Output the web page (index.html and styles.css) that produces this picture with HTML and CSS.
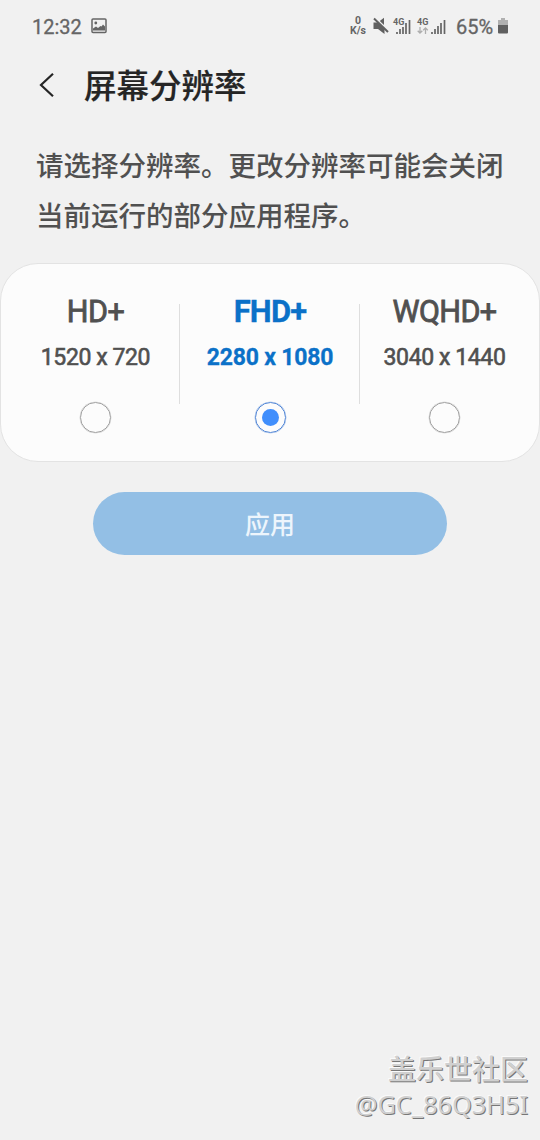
FILE: index.html
```html
<!DOCTYPE html>
<html lang="zh-CN">
<head>
<meta charset="utf-8">
<title>屏幕分辨率</title>
<link rel="stylesheet" href="styles.css">
</head>
<body>
<div class="screen">
  <div class="status">
    <span class="clock">12:32</span>
    <svg class="picture" width="16" height="16" viewBox="0 0 16 16"><rect x="1" y="1" width="14" height="13.5" rx="1" fill="none" stroke="#656565" stroke-width="1.5"/><circle cx="4.8" cy="5" r="1.4" fill="#656565"/><path d="M2 12.5V10.500l3-2 2 1.500 2.500-2 1 .5L12 6.500l2 2v4z" fill="#656565"/></svg>
    <div class="speed"><span>0</span><span>K/s</span></div>
    <svg class="mute" width="16" height="18" viewBox="0 0 16 18"><path d="M0.500 5.500h4L11.500 12v5L5 12H0.500z" fill="#606060"/><path d="M6.800 4L11 .8v7.200z" fill="#606060"/><path d="M1 1.500l14 13.500" stroke="#606060" stroke-width="2"/></svg>
    <div class="net first"><span class="gen">4G</span><svg class="bars" width="15" height="14" viewBox="0 0 15 14"><path d="M1 12v2M4 9v5M7 6v8M10 3v11M13.500 0v14" stroke="#656565" stroke-width="1.700"/></svg></div>
    <div class="net second"><span class="gen">4G</span><svg class="arrows" width="12" height="7" viewBox="0 0 12 7"><path d="M3 0v6M.7 3.700L3 6l2.300-2.300M8.500 7V1M6.200 3.300L8.500 1l2.300 2.300" fill="none" stroke="#adadad" stroke-width="1.300"/></svg><svg class="bars" width="15" height="14" viewBox="0 0 15 14"><path d="M1 12v2M4 9v5M7 6v8M10 3v11M13.500 0v14" stroke="#656565" stroke-width="1.700"/></svg></div>
    <span class="percent">65%</span>
    <svg class="battery" width="10" height="16" viewBox="0 0 10 16"><path d="M3 0h4v2h3v5H0V2h3z" fill="#b0b0b0"/><path d="M0 7h10v7.500q0 1-1 1H1q-1 0-1-1z" fill="#606060"/></svg>
  </div>
  <div class="header">
    <svg class="back" width="16" height="26" viewBox="0 0 16 26"><path d="M14 1.800L2 13l12 11.200" fill="none" stroke="#252525" stroke-width="2.200"/></svg>
    <h1 class="title">屏幕分辨率</h1>
  </div>
  <p class="description">请选择分辨率。更改分辨率可能会关闭<br>当前运行的部分应用程序。</p>
  <div class="card">
    <div class="option left"><span class="name">HD+</span><span class="size">1520 x 720</span><span class="radio"></span></div>
    <div class="option middle selected"><span class="name">FHD+</span><span class="size">2280 x 1080</span><span class="radio"></span></div>
    <div class="option right"><span class="name">WQHD+</span><span class="size">3040 x 1440</span><span class="radio"></span></div>
  </div>
  <button class="apply">应用</button>
  <div class="watermark"><span class="community">盖乐世社区</span><span class="user">@GC_86Q3H5I</span></div>
</div>
</body>
</html>
```
FILE: styles.css
```css
* { box-sizing: border-box; }
body { margin: 0; background: #f1f1f1; font-family: Roboto, "Noto Sans CJK SC", sans-serif; }
.screen { width: 540px; height: 1140px; display: flex; flex-direction: column; color: #505050; overflow: hidden; }
.status { height: 52px; display: flex; align-items: center; padding-left: 32px; color: #656565; white-space: nowrap; flex: none; }
.clock { font-size: 20px; width: 50px; padding-top: 1px; -webkit-text-stroke: .3px; }
.picture { margin-left: 9px; }
.speed { margin-left: 242px; width: 18px; display: flex; flex-direction: column; align-items: center; font-size: 10.500px; line-height: 10px; font-weight: 700; }
.mute { margin-left: 6px; }
.net { position: relative; height: 18px; }
.first { width: 18px; margin-left: 4px; }
.second { width: 29px; margin-left: 6px; }
.gen { position: absolute; left: 0; top: 1px; font-size: 9px; line-height: 9px; font-weight: 700; background: #f1f1f1; z-index: 1; }
.bars { position: absolute; right: 0; top: 3px; }
.arrows { position: absolute; left: 0; top: 10px; }
.percent { margin-left: 10px; font-size: 20px; width: 37px; padding-top: 1px; -webkit-text-stroke: .3px; }
.battery { margin-left: 5px; }
.header { display: flex; align-items: center; height: 66px; padding-left: 39px; flex: none; }
.title { margin: 4px 0 0 29px; font-size: 32.500px; line-height: 48px; font-weight: 500; color: #252525; -webkit-text-stroke: .2px; }
.description { margin: 24px 0 0 36px; font-size: 27.500px; line-height: 50px; font-weight: 500; white-space: nowrap; }
.card { height: 199px; margin-top: 21px; flex: none; display: grid; grid-template-columns: 180px 180px 1fr; padding-top: 29px; background: #fcfcfc; border: 1px solid #e3e3e3; border-radius: 38px; }
.option { display: flex; flex-direction: column; align-items: center; position: relative; }
.left { padding-left: 9px; }
.middle { padding-right: 2px; }
.right { padding-right: 11px; }
.name { font-size: 30.500px; line-height: 37px; font-weight: 400; letter-spacing: -.6px; -webkit-text-stroke: .8px; }
.size { margin-top: 14px; font-size: 23px; line-height: 27px; font-weight: 400; letter-spacing: -.4px; -webkit-text-stroke: .6px; }
.radio { width: 31px; height: 31px; margin-top: 31px; border: 1.500px solid #a0a0a0; border-radius: 50%; display: flex; align-items: center; justify-content: center; box-shadow: 0 0 0 .3px #c4c4c4; }
.selected { color: #0b71c8; }
.selected .name { font-size: 31px; font-weight: 700; letter-spacing: -.8px; -webkit-text-stroke: .3px; }
.selected .size { font-weight: 700; letter-spacing: -.2px; -webkit-text-stroke: .3px; }
.selected .radio { border-color: #5286d6; box-shadow: 0 0 0 .3px #86abe2; }
.selected .radio::after { content: ""; width: 17px; height: 17px; border-radius: 50%; background: #408efc; }
.middle::before, .middle::after { content: ""; position: absolute; top: 11px; width: 1px; height: 100px; background: #dedede; }
.middle::before { left: -2px; }
.middle::after { right: 1px; }
.apply { width: 354px; height: 63px; margin: 30px auto 0; padding: 0 0 1px; border: 0; border-radius: 32px; background: #93bfe5; color: #edf5fc; font-family: "Noto Sans CJK SC", sans-serif; font-size: 25px; font-weight: 500; flex: none; }
.watermark { margin-top: auto; padding: 0 12px 17px 0; display: flex; flex-direction: column; align-items: flex-end; color: #d0d0d0; }
.community { font: 500 28px/36px "Noto Sans CJK SC", sans-serif; text-shadow: 1px 1px 0 #777, -1px -1px 0 #fafafa; }
.user { font: 400 25.300px/37px "Noto Sans", sans-serif; text-shadow: 1px 1px 0 #777, -1px -1px 0 #fafafa; }
```
